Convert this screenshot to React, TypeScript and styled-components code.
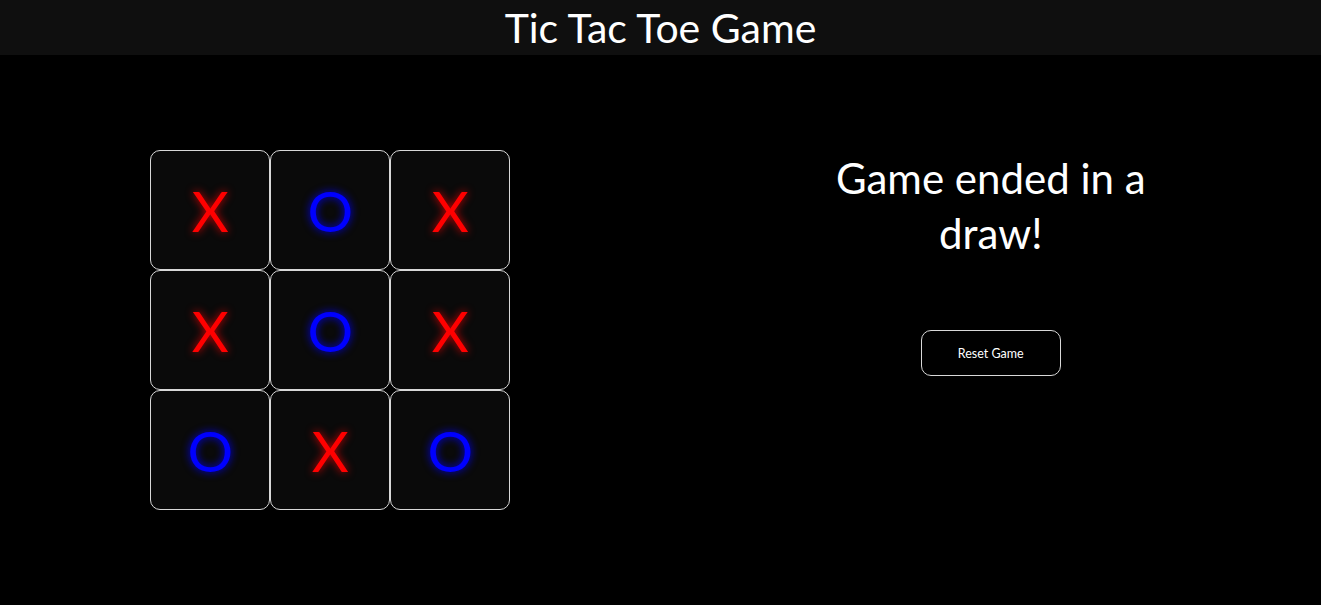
import React from "react";
import styled, { createGlobalStyle } from "styled-components";

const Global = createGlobalStyle`
  html, body { margin: 0; padding: 0; background: #000; }
  body { font-family: Lato, "Open Sans", sans-serif; color: #fff; }
  * { box-sizing: border-box; }
`;

const Page = styled.div`
  width: 1321px;
  height: 605px;
  display: flex;
  flex-direction: column;
  background: #000;
  overflow: hidden;
`;

const Header = styled.header`
  height: 55px;
  flex: none;
  background: #0f0f0f;
  display: flex;
  align-items: center;
  justify-content: center;
`;

const Title = styled.h1`
  margin: 0;
  font-size: 41px;
  font-weight: 400;
  line-height: 1;
`;

const Main = styled.main`
  flex: 1;
  display: grid;
  grid-template-columns: 1fr 1fr;
`;

const BoardColumn = styled.section`
  display: flex;
  align-items: center;
  justify-content: center;
`;

const Board = styled.div`
  display: grid;
  grid-template-columns: repeat(3, 120px);
  grid-template-rows: repeat(3, 120px);
`;

const Cell = styled.button<{ $mark: "X" | "O" }>`
  width: 120px;
  height: 120px;
  padding: 0;
  border: 1px solid #d8d8d8;
  border-radius: 10px;
  background: #0a0a0a;
  display: flex;
  align-items: center;
  justify-content: center;
  font-family: Lato, sans-serif;
  font-size: 57px;
  font-weight: 400;
  line-height: 1;
  color: ${(p) => (p.$mark === "X" ? "#ff0000" : "#0000ff")};
  text-shadow: 0 0 8px ${(p) => (p.$mark === "X" ? "rgba(255,0,0,0.85)" : "rgba(0,0,255,0.95)")};
`;

const StatusColumn = styled.section`
  display: flex;
  flex-direction: column;
  align-items: center;
  padding-top: 96px;
`;

const Status = styled.h2`
  margin: 0;
  width: 340px;
  text-align: center;
  font-size: 42px;
  font-weight: 400;
  line-height: 55px;
`;

const ResetButton = styled.button`
  margin-top: 69px;
  width: 140px;
  height: 46px;
  background: #000;
  color: #fff;
  border: 1px solid #d8d8d8;
  border-radius: 10px;
  font-family: Lato, sans-serif;
  font-size: 12.5px;
  cursor: pointer;
`;

const cells: ("X" | "O")[] = ["X", "O", "X", "X", "O", "X", "O", "X", "O"];

export default function App() {
  return (
    <>
      <Global />
      <Page>
        <Header>
          <Title>Tic Tac Toe Game</Title>
        </Header>
        <Main>
          <BoardColumn>
            <Board>
              {cells.map((m, i) => (
                <Cell key={i} $mark={m}>
                  {m}
                </Cell>
              ))}
            </Board>
          </BoardColumn>
          <StatusColumn>
            <Status>Game ended in a draw!</Status>
            <ResetButton>Reset Game</ResetButton>
          </StatusColumn>
        </Main>
      </Page>
    </>
  );
}
